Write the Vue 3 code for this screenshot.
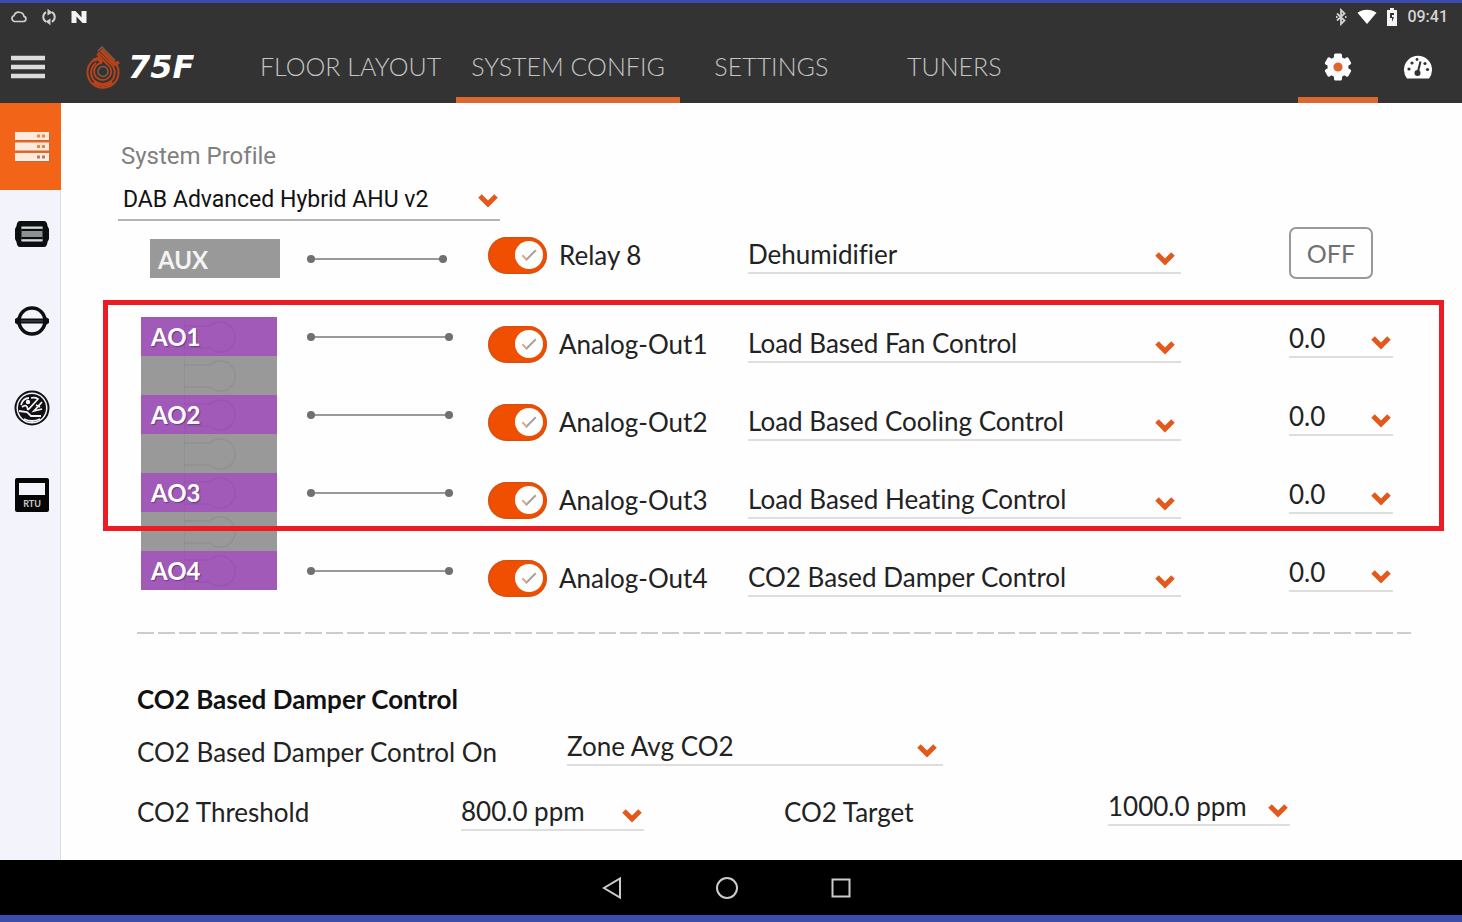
<template>
  <div class="tablet">
    <header class="top">
      <div class="status-bar">
        <div class="status-left">
          <svg viewBox="0 0 18 18" width="18" height="18">
            <path d="M4.5 13.5h9a2.6 2.6 0 0 0 .5-5.1 5.2 5.2 0 0 0-10-.7 3 3 0 0 0 .5 5.8z" fill="none" stroke="#d0d0d0" stroke-width="1.7"/>
          </svg>
          <svg viewBox="0 0 18 18" width="18" height="18">
            <path d="M6 13.8A5.6 5.6 0 0 1 6 4.200M12 4.200a5.6 5.6 0 0 1 0 9.600" fill="none" stroke="#d0d0d0" stroke-width="2"/>
            <path d="M7.500 .8l5 3.700-5 3zM10.500 17.200l-5-3.700 5-3z" fill="#d0d0d0"/>
          </svg>
          <svg viewBox="0 0 18 18" width="18" height="18">
            <path d="M1.500 15V3h4l6 6.500V3h5v12h-4l-6-6.500V15z" fill="#f4f4f4"/>
          </svg>
        </div>
        <div class="status-right">
          <svg viewBox="0 0 14 18" width="14" height="18">
            <path d="M3 5.500l7.500 7L7 16V2l3.500 3.500-7.500 7M2 9h1.500M11 9h1.500" fill="none" stroke="#d0d0d0" stroke-width="1.800"/>
          </svg>
          <svg viewBox="0 0 20 18" width="20" height="18">
            <path d="M10 16L.5 4.800C3.200 2.800 6.400 1.800 10 1.800s6.800 1 9.500 3z" fill="#fff"/>
          </svg>
          <svg viewBox="0 0 12 18" width="12" height="18">
            <path d="M1 2h3V0h4v2h3v16H1z" fill="#f4f4f4"/>
            <path d="M4 5h4v2H6v2h2l-2 5v-4H4z" fill="#333"/>
          </svg>
          <span class="clock">09:41</span>
        </div>
      </div>

      <div class="nav-bar">
        <button class="menu-btn" aria-label="menu">
          <svg viewBox="0 0 34 24" width="34" height="24">
            <path d="M0 3h34M0 12h34M0 21h34" stroke="#dcdcdc" stroke-width="4.500"/>
          </svg>
        </button>
        <div class="logo">
          <svg viewBox="0 0 36 44" width="36" height="44">
            <g fill="none" stroke="#b8431b">
              <path d="M13 6l4-4 13 13.500" stroke="#8a5a48" stroke-width="1.500"/>
              <path d="M16 5l14 14 4-2M8 15.500l5-2 4 4" stroke-width="3.500"/>
              <path d="M8 15.500a15.500 15.500 0 1 0 22 2" stroke-width="2"/>
              <path d="M11 18a11.800 11.800 0 1 0 15.500 1.500L13 7" stroke-width="2"/>
              <path d="M17 18a8.500 8.500 0 1 0 5.500 1.500L12 9" stroke-width="1.800"/>
              <path d="M9 37q9 6 18 0" stroke-width="4"/>
            </g>
            <circle cx="18" cy="26.500" r="5" fill="none" stroke="#8a5a48" stroke-width="1.500"/>
          </svg>
          <span>75F</span>
        </div>
        <nav class="tabs">
          <a
            v-for="tab in tabs"
            :key="tab"
            href="#"
            :class="{ active: tab === activeTab }"
            @click.prevent="activeTab = tab"
          >{{ tab }}</a>
        </nav>
        <div class="modes">
          <button class="mode active" aria-label="configuration">
            <svg viewBox="0 0 28 28" width="28" height="28">
              <g fill="#fff">
                <circle cx="14" cy="14" r="10.500"/>
                <rect v-for="a in [0, 60, 120]" :key="a" x="10" y="0.500" width="8" height="27" rx="1.500" :transform="`rotate(${a} 14 14)`"/>
              </g>
              <circle cx="14" cy="14" r="4.600" fill="#e0662b"/>
            </svg>
          </button>
          <button class="mode" aria-label="dashboard">
            <svg viewBox="0 0 28 24" width="28" height="24">
              <path d="M3 23.500A14 14 0 1 1 25 23.500z" fill="#fff"/>
              <path d="M16.500 6.500l-3 12" stroke="#333" stroke-width="2"/>
              <circle cx="13.500" cy="18" r="3" fill="#333"/>
              <g fill="#333">
                <circle cx="5" cy="14" r="1.600"/>
                <circle cx="8" cy="8" r="1.600"/>
                <circle cx="13" cy="4.500" r="1.400"/>
                <circle cx="21" cy="8.500" r="1.600"/>
                <circle cx="23.500" cy="14.500" r="1.600"/>
              </g>
            </svg>
          </button>
        </div>
      </div>
    </header>

    <div class="body">
      <aside class="side">
        <button class="side-item active" aria-label="system">
          <svg viewBox="0 0 36 32" width="36" height="32">
            <path d="M2 2h34v8H2zM2 12.500h34v8H2zM2 23h34v8H2z" fill="#b96a3e"/>
            <path d="M1 1h34v8H1zM1 11.500h34v8H1zM1 22h34v8H1z" fill="#ffeadd"/>
            <path d="M23 5h3M28 5h3M23 15.500h3M28 15.500h3" stroke="#f7813b" stroke-width="3"/>
            <path d="M23 26h3M28 26h3" stroke="#a08070" stroke-width="3"/>
          </svg>
        </button>
        <button class="side-item" aria-label="terminal unit">
          <svg viewBox="0 0 36 26" width="36" height="26">
            <path d="M6 0h24q3 0 3.500 5l1.500 3v10l-1.500 3q-.5 5-3.500 5H6q-3 0-3.500-5L1 18V8l1.500-3Q3 0 6 0z" fill="#0c0f10"/>
            <path d="M7.500 6h21v14h-21z" fill="#8d9191"/>
            <path d="M7.500 6.500h21M7.500 19.500h21" stroke="#d8dada" stroke-width="2"/>
            <path d="M7.500 9h21M7.500 17h21" stroke="#0c0f10" stroke-width="1.800"/>
          </svg>
        </button>
        <button class="side-item" aria-label="damper">
          <svg viewBox="0 0 36 32" width="36" height="32">
            <circle cx="18" cy="16" r="13" fill="none" stroke="#0c0f10" stroke-width="3.500"/>
            <path d="M1 14l5-3v2.500h24V11l5 3v4l-5 3v-2.500H6V21l-5-3z" fill="#0c0f10"/>
            <path d="M7 16h22" stroke="#55585a" stroke-width="1"/>
          </svg>
        </button>
        <button class="side-item" aria-label="gauge">
          <svg viewBox="0 0 36 36" width="36" height="36">
            <circle cx="18" cy="18" r="16.500" fill="#f2f3fb" stroke="#111" stroke-width="2"/>
            <circle cx="18" cy="18" r="14" fill="#111"/>
            <g fill="none" stroke="#f2f3fb" stroke-width="1.800">
              <path d="M7 15q2-7 8-7M17 8q4-1 7 1L14 20M8 17q5-4 6 3M28 12l-8 9 8-2M5 21l8 1 4 4h10"/>
              <path d="M10 29q8 4 16 0M22 15l4 2"/>
            </g>
            <circle cx="14" cy="12" r="2.200" fill="#f2f3fb"/>
          </svg>
        </button>
        <button class="side-item" aria-label="RTU">
          <svg viewBox="0 0 36 36" width="36" height="36">
            <rect x="1" y="1" width="34" height="34" rx="2" fill="#060606"/>
            <rect x="5" y="6" width="26" height="12" fill="#f2f3fb"/>
            <text x="18" y="30" text-anchor="middle" class="rtu">RTU</text>
          </svg>
        </button>
      </aside>

      <main class="content">
        <div class="profile">
          <label class="profile-label" for="profile">System Profile</label>
          <div class="drop">
            <select id="profile"><option>DAB Advanced Hybrid AHU v2</option></select>
            <svg class="chevron" viewBox="0 0 24 16" width="24" height="16"><path d="M4 4l8 8 8-8"/></svg>
          </div>
        </div>

        <div class="relay">
          <div class="terminal-aux">AUX</div>
          <div class="row">
            <i class="wire"></i>
            <input id="relay8" v-model="relay.on" class="toggle" type="checkbox" />
            <label for="relay8">{{ relay.name }}</label>
            <div class="drop">
              <select :aria-label="relay.name + ' mapping'"><option>{{ relay.mapping }}</option></select>
              <svg class="chevron" viewBox="0 0 24 16" width="24" height="16"><path d="M4 4l8 8 8-8"/></svg>
            </div>
            <button class="off-btn">OFF</button>
          </div>
        </div>

        <div class="analog">
          <div class="terminals">
            <div v-for="n in 7" :key="n" class="slot" :class="{ on: n % 2 }">
              <span v-if="n % 2">AO{{ (n + 1) / 2 }}</span>
              <svg viewBox="0 0 56 38" width="56" height="38">
                <path d="M0 0v38M0 8h26a15 15 0 1 1 0 22H0" fill="none" stroke="#000" stroke-opacity=".06" stroke-width="1.500"/>
              </svg>
            </div>
          </div>
          <div class="rows">
            <div v-for="(out, i) in outputs" :key="out.name" class="row">
              <i class="wire"></i>
              <input :id="'ao' + i" v-model="out.on" class="toggle" type="checkbox" />
              <label :for="'ao' + i">{{ out.name }}</label>
              <div class="drop">
                <select :aria-label="out.name + ' mapping'"><option>{{ out.mapping }}</option></select>
                <svg class="chevron" viewBox="0 0 24 16" width="24" height="16"><path d="M4 4l8 8 8-8"/></svg>
              </div>
              <div class="drop value">
                <select :aria-label="out.name + ' test value'"><option>{{ out.value }}</option></select>
                <svg class="chevron" viewBox="0 0 24 16" width="24" height="16"><path d="M4 4l8 8 8-8"/></svg>
              </div>
            </div>
          </div>
          <!-- red frame over the first three outputs -->
          <div class="highlight"></div>
        </div>

        <div class="divider"></div>

        <section class="damper">
          <h2>CO2 Based Damper Control</h2>
          <div class="damper-row source">
            <label for="source">CO2 Based Damper Control On</label>
            <div class="drop raised">
              <select id="source"><option>Zone Avg CO2</option></select>
              <svg class="chevron" viewBox="0 0 24 16" width="24" height="16"><path d="M4 4l8 8 8-8"/></svg>
            </div>
          </div>
          <div class="damper-row limits">
            <label for="threshold">CO2 Threshold</label>
            <div class="drop">
              <select id="threshold"><option>800.0 ppm</option></select>
              <svg class="chevron" viewBox="0 0 24 16" width="24" height="16"><path d="M4 4l8 8 8-8"/></svg>
            </div>
            <label class="target" for="target">CO2 Target</label>
            <div class="drop raised">
              <select id="target"><option>1000.0 ppm</option></select>
              <svg class="chevron" viewBox="0 0 24 16" width="24" height="16"><path d="M4 4l8 8 8-8"/></svg>
            </div>
          </div>
        </section>
      </main>
    </div>

    <footer class="android-nav">
      <button aria-label="back">
        <svg viewBox="0 0 24 24" width="24" height="24"><path d="M19 2.500v19L3 12z"/></svg>
      </button>
      <button aria-label="home">
        <svg viewBox="0 0 24 24" width="24" height="24"><circle cx="12" cy="12" r="10"/></svg>
      </button>
      <button aria-label="recent apps">
        <svg viewBox="0 0 24 24" width="24" height="24"><path d="M3.500 3.500h17v17h-17z"/></svg>
      </button>
    </footer>
  </div>
</template>

<script setup>
import { reactive, ref } from 'vue'

const tabs = ['FLOOR LAYOUT', 'SYSTEM CONFIG', 'SETTINGS', 'TUNERS']
const activeTab = ref('SYSTEM CONFIG')

const relay = reactive({ name: 'Relay 8', mapping: 'Dehumidifier', on: true })

const outputs = reactive([
  { name: 'Analog-Out1', mapping: 'Load Based Fan Control', value: '0.0', on: true },
  { name: 'Analog-Out2', mapping: 'Load Based Cooling Control', value: '0.0', on: true },
  { name: 'Analog-Out3', mapping: 'Load Based Heating Control', value: '0.0', on: true },
  { name: 'Analog-Out4', mapping: 'CO2 Based Damper Control', value: '0.0', on: true }
])
</script>

<style>
body {
  background: #fff;
}
</style>

<style scoped>
.tablet {
  min-height: 100vh;
  box-sizing: border-box;
  display: flex;
  flex-direction: column;
  border-top: 3px solid #3c4cae;
  border-bottom: 7px solid #3c4cae;
  font-family: Lato, sans-serif;
  font-size: 26px;
  line-height: 32px;
  font-variant-ligatures: none;
  color: #222;
}

button {
  border: none;
  background: none;
  padding: 0;
  font: inherit;
  cursor: pointer;
}

svg {
  display: block;
}

/* 顶部 */
.top {
  background: #333;
}

.status-bar {
  display: flex;
  justify-content: space-between;
  align-items: center;
  height: 28px;
  padding: 0 14px 0 10px;
}

.status-left {
  display: flex;
  gap: 12px;
}

.status-right {
  display: flex;
  align-items: center;
  gap: 9px;
}

.clock {
  font-family: Roboto, sans-serif;
  font-size: 16px;
  font-weight: 500;
  line-height: 20px;
  color: #d4d4d4;
}

.nav-bar {
  display: flex;
  height: 72px;
}

.menu-btn {
  width: 56px;
  display: flex;
  justify-content: center;
  align-items: center;
}

.logo {
  width: 189px;
  box-sizing: border-box;
  padding-left: 29px;
  display: flex;
  align-items: center;
  gap: 7px;
  font: italic bold 32px/40px "DejaVu Sans", sans-serif;
  color: #fff;
}

.tabs {
  display: flex;
  flex: 1;
}

.tabs a {
  box-sizing: border-box;
  min-width: 183px;
  padding: 2px 15px 0;
  border-bottom: 6px solid transparent;
  font-size: 25px;
  font-weight: 300;
  line-height: 66px;
  text-align: center;
  white-space: nowrap;
  text-decoration: none;
  color: #c4c4c4;
}

.tabs a.active {
  border-bottom-color: #dc682e;
}

.modes {
  display: flex;
  padding-right: 4px;
}

.mode {
  width: 80px;
  padding-top: 6px;
  display: flex;
  justify-content: center;
  align-items: center;
  border-bottom: 6px solid transparent;
}

.mode.active {
  border-bottom-color: #dc682e;
}

/* 侧边栏 */
.body {
  flex: 1;
  display: flex;
}

.side {
  width: 61px;
  flex: none;
  box-sizing: border-box;
  background: #f2f3fb;
  border-right: 1px solid #dcdce2;
}

.side-item {
  width: 61px;
  height: 87px;
  padding-left: 3px;
  display: flex;
  justify-content: center;
  align-items: center;
}

.side-item.active {
  background: #f26518;
}

.rtu {
  font: bold 9px Lato, sans-serif;
  fill: #ccc;
}

/* 内容区 */
.content {
  flex: 1;
  min-width: 0;
  box-sizing: border-box;
  padding: 38px 69px 17px 57px;
  background: #fefefe;
}

.drop {
  display: grid;
  align-items: center;
  height: 38px;
  box-sizing: border-box;
  border-bottom: 2px solid #dedede;
}

.drop select {
  grid-area: 1 / 1;
  width: 100%;
  height: 36px;
  padding: 0;
  border: none;
  background: none;
  appearance: none;
  font: inherit;
  font-variant-ligatures: none;
  color: inherit;
}

.chevron {
  grid-area: 1 / 1;
  justify-self: end;
  margin-top: 8px;
  margin-right: 4px;
  pointer-events: none;
  fill: none;
  stroke: #e2591b;
  stroke-width: 5;
}

.profile {
  width: 382px;
  font-family: Roboto, sans-serif;
  font-size: 24px;
}

.profile-label {
  display: block;
  margin: 0 0 10px 3px;
  line-height: 30px;
  color: #808080;
}

.profile .drop {
  height: 40px;
  font-size: 23px;
  color: #111;
  border-bottom-color: #b4b4b4;
}

.profile .drop select {
  padding-left: 5px;
}

.profile .chevron {
  margin-top: 0;
  margin-right: 0;
}

.relay,
.analog {
  display: grid;
  grid-template-columns: 166px 1fr;
  margin-left: 23px;
}

.relay {
  align-items: center;
  height: 68px;
  margin-bottom: 16px;
}

.terminal-aux {
  width: 130px;
  height: 39px;
  box-sizing: border-box;
  margin: 6px 0 0 9px;
  padding: 5px 0 0 8px;
  background: #999;
  font-size: 24px;
  font-weight: bold;
  color: #f4f4f4;
}

.analog {
  position: relative;
}

.terminals {
  width: 136px;
  padding-top: 12px;
}

.slot {
  display: flex;
  align-items: center;
  justify-content: flex-end;
  height: 39px;
  box-sizing: border-box;
  padding-right: 37px;
  background: #999;
  color: #fff;
  font-size: 24px;
  font-weight: bold;
  text-shadow: 1px 1px 1px #6b3a80;
}

.slot.on {
  background: #a25ab9;
}

.slot span {
  flex: 1;
  margin-right: -24px;
  padding-left: 10px;
}

.row {
  display: grid;
  grid-template-columns: 146px 35px 71px 189px minmax(200px, 1fr) 108px 104px;
  align-items: center;
  height: 78px;
}

.relay .row {
  height: 68px;
}

.wire {
  display: flex;
  justify-content: space-between;
  align-items: center;
  height: 8px;
  margin-bottom: 14px;
  background: linear-gradient(#999, #999) center / 100% 2px no-repeat;
}

.relay .wire {
  margin: 8px 6px 0 0;
}

.wire::before,
.wire::after {
  content: "";
  width: 8px;
  height: 8px;
  border-radius: 50%;
  background: #707070;
}

.toggle {
  grid-column: 3;
  appearance: none;
  display: grid;
  align-items: center;
  width: 59px;
  height: 37px;
  margin: 0;
  border-radius: 19px;
  background: #bbb;
  cursor: pointer;
}

.toggle::before {
  content: "";
  grid-area: 1 / 1;
  width: 28px;
  height: 28px;
  margin-left: 4px;
  border-radius: 50%;
  background: #fff;
}

.toggle:checked {
  background: #f04e00;
  box-shadow: inset 0 0 2px #8a5a3c;
}

.toggle:checked::before {
  margin-left: 27px;
}

.toggle:checked::after {
  content: "";
  grid-area: 1 / 1;
  width: 12px;
  height: 5px;
  margin: 0 0 4px 34px;
  border-left: 2px solid #e0a88c;
  border-bottom: 2px solid #a8a09c;
  transform: rotate(-45deg);
}

.row > .value,
.off-btn {
  grid-column: 7;
}

.value,
.raised {
  margin-bottom: 10px;
}

.value .chevron,
.limits .chevron {
  margin-right: 0;
}

.off-btn {
  width: 84px;
  height: 52px;
  margin-bottom: 4px;
  border: 2px solid #999;
  border-radius: 7px;
  font-size: 25px;
  color: #707070;
}

.highlight {
  position: absolute;
  top: -5px;
  left: -38px;
  right: -51px;
  height: 231px;
  box-sizing: border-box;
  border: 5px solid #ed1c24;
  pointer-events: none;
}

.divider {
  height: 2px;
  margin: 15px -18px 0 19px;
  background: repeating-linear-gradient(90deg, #ccc 0 17px, transparent 17px 21px);
}

/* CO2 */
.damper {
  margin: 49px 0 0 19px;
}

.damper h2 {
  margin: 0 0 7px;
  font-size: 26px;
  font-weight: bold;
  line-height: 32px;
  color: #111;
}

.damper-row {
  display: grid;
  align-items: center;
  height: 60px;
}

.source {
  grid-template-columns: 430px 376px;
}

.limits {
  grid-template-columns: 324px 183px 140px 324px 182px;
}

.target {
  grid-column: 4;
}

/* 底部导航 */
.android-nav {
  display: flex;
  justify-content: center;
  align-items: center;
  gap: 90px;
  height: 55px;
  padding-right: 8px;
  background: #000;
}

.android-nav svg {
  fill: none;
  stroke: #ccc;
  stroke-width: 2;
}
</style>
